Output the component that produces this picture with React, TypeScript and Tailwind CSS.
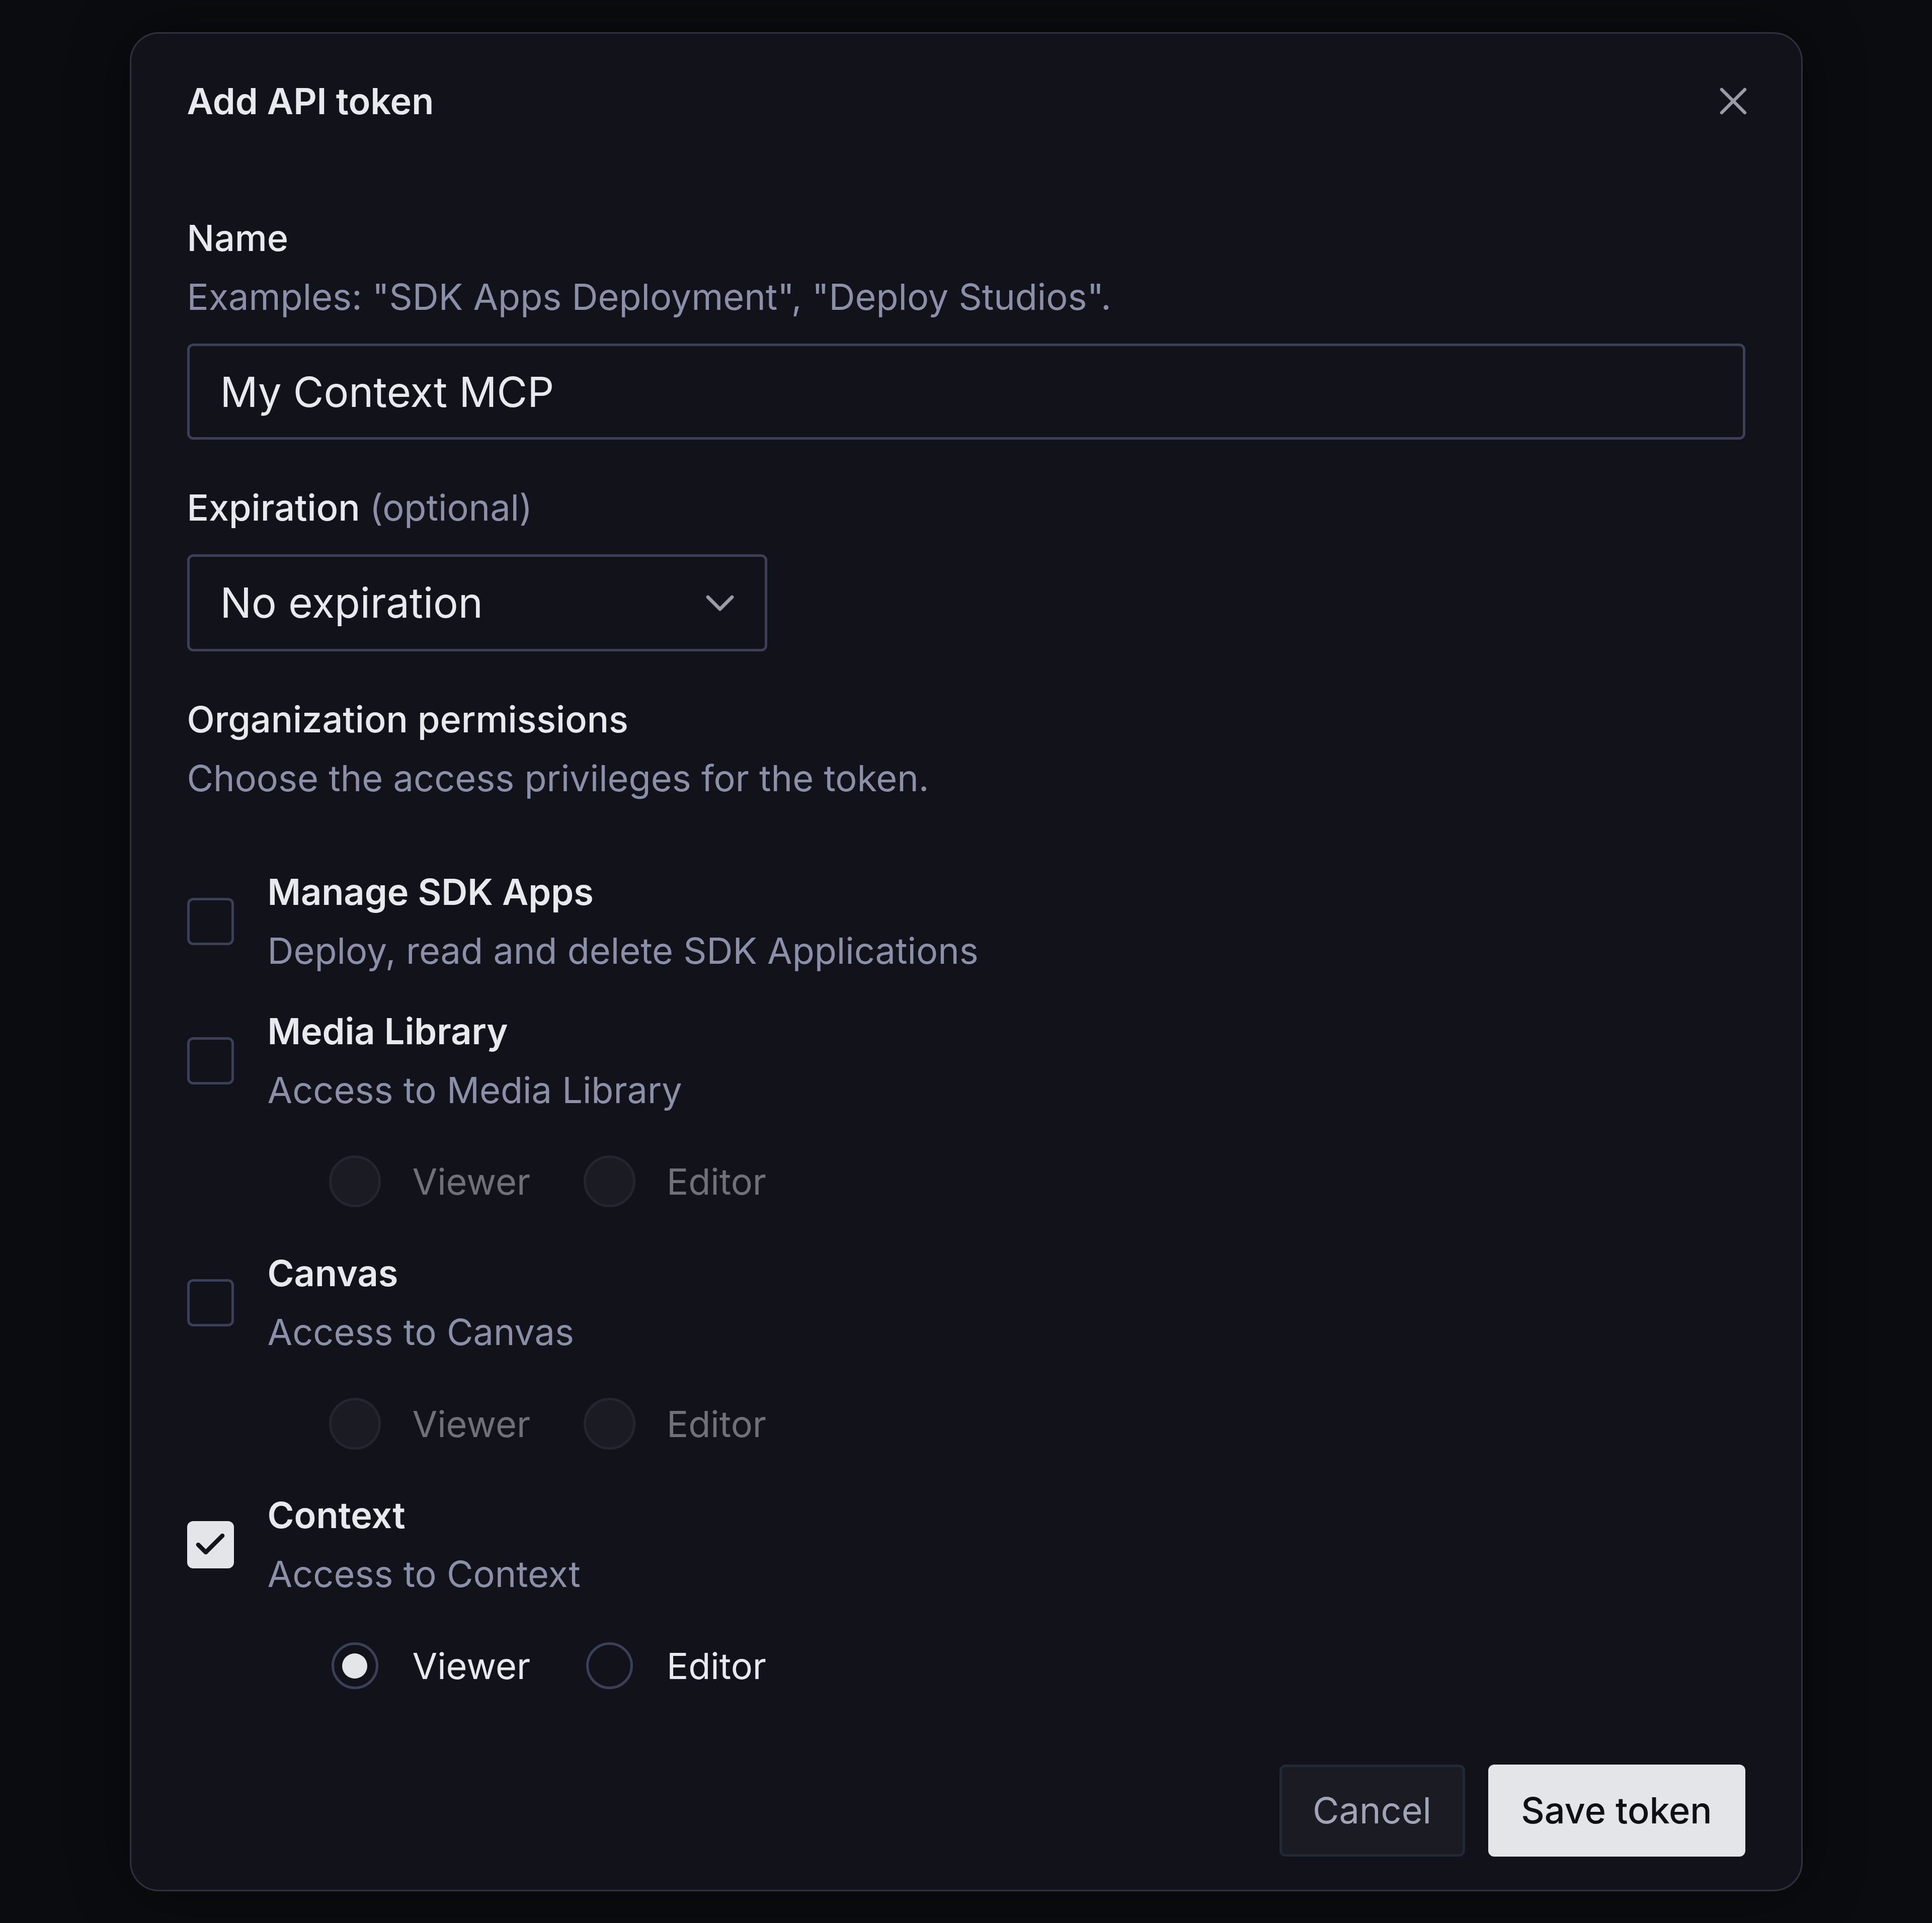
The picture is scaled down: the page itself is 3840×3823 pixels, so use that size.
import { Check, ChevronDown, X } from 'lucide-react';

interface PermissionProps {
  title: string;
  description: string;
  checked?: boolean;
  className?: string;
}

interface RoleRadiosProps {
  enabled?: boolean;
  className?: string;
}

function Permission({ title, description, checked, className = '' }: PermissionProps) {
  return (
    <div className={`flex items-center gap-[67px] ${className}`}>
      {checked ? (
        <span className="flex h-[94px] w-[93px] items-center justify-center rounded-[12px] bg-[#e4e5e9]">
          <Check className="h-[72px] w-[72px] text-[#12131b]" strokeWidth={2.9} />
        </span>
      ) : (
        <span className="h-[94px] w-[93px] rounded-[12px] border-[5px] border-[#3b4058]" />
      )}
      <div>
        <div className="pb-[2px] text-[72px] leading-[115px] font-semibold text-[#e8e9ed]">{title}</div>
        <div className="pb-[2px] text-[72px] leading-[115px] text-[#8b8fa8]">{description}</div>
      </div>
    </div>
  );
}

function RoleRadios({ enabled, className = '' }: RoleRadiosProps) {
  const text = enabled ? 'text-[#e8e9ed]' : 'text-[#6f7078]';
  return (
    <div className={`flex items-center pl-[282px] text-[72px] leading-[103px] ${className}`}>
      <span className="flex h-[103px] w-[103px] items-center justify-center">
        {enabled ? (
          <span className="flex h-[93px] w-[93px] items-center justify-center rounded-full border-[5px] border-[#3b4058]">
            <span className="h-[50px] w-[50px] rounded-full bg-[#e4e5e9]" />
          </span>
        ) : (
          <span className="h-[103px] w-[103px] rounded-full border-[5px] border-[#24252f] bg-[#1a1b23]" />
        )}
      </span>
      <span className={`ml-[63px] ${text}`}>Viewer</span>
      <span className="ml-[106px] flex h-[103px] w-[103px] items-center justify-center">
        {enabled ? (
          <span className="h-[93px] w-[93px] rounded-full border-[5px] border-[#3b4058]" />
        ) : (
          <span className="h-[103px] w-[103px] rounded-full border-[5px] border-[#24252f] bg-[#1a1b23]" />
        )}
      </span>
      <span className={`ml-[62px] ${text}`}>Editor</span>
    </div>
  );
}

export default function App() {
  return (
    <div className="min-h-[3823px] bg-[#0b0c0f] pt-[64px] font-['Inter',sans-serif]">
      <div className="mx-auto w-[3325px] rounded-[58px] border-[3px] border-[#2f3140] bg-[#11121a] px-[111px] pt-[76px] pb-[66px] shadow-[0_0_120px_rgba(0,0,0,0.45)]">
        <div className="flex items-center justify-between">
          <h2 className="text-[72px] leading-[116px] font-semibold text-[#e8e9ed]">Add API token</h2>
          <X className="mr-[-22px] h-[92px] w-[92px] text-[#9a9ba6]" strokeWidth={1.7} />
        </div>

        <div className="mt-[156px] pb-[2px] text-[72px] leading-[115px] font-medium text-[#e8e9ed]">Name</div>
        <div className="pb-[2px] text-[72px] leading-[115px] text-[#8b8fa8]">
          Examples: "SDK Apps Deployment", "Deploy Studios".
        </div>
        <input
          readOnly
          value="My Context MCP"
          className="mt-[34px] block h-[191px] w-full rounded-[12px] border-[5px] border-[#3b4058] bg-transparent px-[61px] text-[83px] text-[#e8e9ed] outline-none"
        />

        <div className="mt-[77px] pb-[2px] text-[72px] leading-[115px] font-medium text-[#e8e9ed]">
          Expiration <span className="font-normal text-[#8b8fa8]">(optional)</span>
        </div>
        <div className="mt-[34px] flex h-[193px] w-[1153px] items-center justify-between rounded-[12px] border-[5px] border-[#3b4058] px-[61px] text-[83px] text-[#e8e9ed]">
          No expiration
          <ChevronDown className="mr-[-20px] h-[96px] w-[96px] text-[#9a9ba6]" strokeWidth={1.7} />
        </div>

        <div className="mt-[77px] pb-[2px] text-[72px] leading-[115px] font-medium text-[#e8e9ed]">Organization permissions</div>
        <div className="pb-[2px] text-[72px] leading-[115px] text-[#8b8fa8]">Choose the access privileges for the token.</div>

        <Permission className="mt-[109px]" title="Manage SDK Apps" description="Deploy, read and delete SDK Applications" />
        <Permission className="mt-[43px]" title="Media Library" description="Access to Media Library" />
        <RoleRadios className="mt-[71px]" />
        <Permission className="mt-[73px]" title="Canvas" description="Access to Canvas" />
        <RoleRadios className="mt-[72px]" />
        <Permission className="mt-[72px]" title="Context" description="Access to Context" checked />
        <RoleRadios className="mt-[72px]" enabled />

        <div className="mt-[145px] flex justify-end gap-[46px]">
          <button
            type="button"
            className="h-[183px] w-[369px] rounded-[12px] border-[5px] border-[#242836] bg-[#1a1b23] pb-[2px] text-[72px] text-[#a0a4b6]"
          >
            Cancel
          </button>
          <button
            type="button"
            className="h-[183px] w-[511px] rounded-[12px] bg-[#e4e5e9] pb-[2px] text-[72px] font-medium text-[#0f1016]"
          >
            Save token
          </button>
        </div>
      </div>
    </div>
  );
}
